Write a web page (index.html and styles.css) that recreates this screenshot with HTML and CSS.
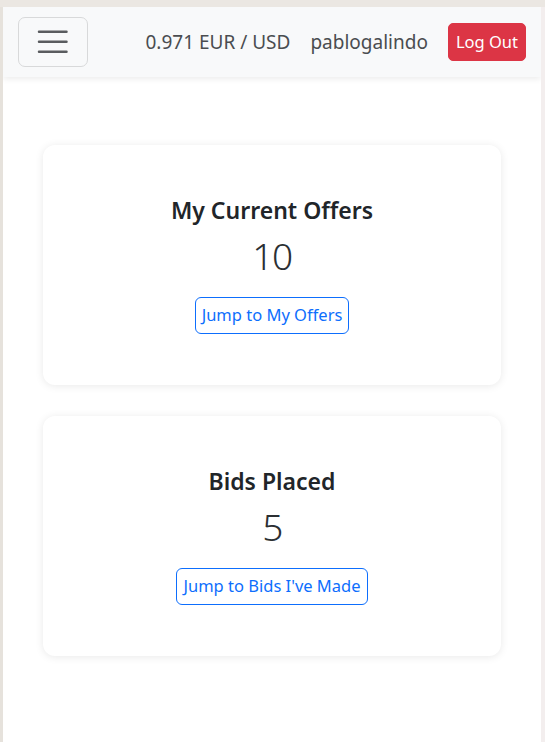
FILE: index.html
```html
<!DOCTYPE html>
<html lang="en">
<head>
<meta charset="utf-8">
<title>Dashboard</title>
<link rel="stylesheet" href="styles.css">
</head>
<body>
<nav class="navbar">
  <button class="toggler" type="button" aria-label="Toggle navigation">
    <svg class="toggler-icon" viewBox="0 0 30 30" width="37.5" height="37.5" aria-hidden="true">
      <path d="M4 7h22M4 15h22M4 23h22" stroke="#5a5c5f" stroke-width="2" stroke-linecap="round" fill="none"/>
    </svg>
  </button>
  <div class="nav-right">
    <span class="nav-text">0.971 EUR / USD</span>
    <span class="nav-text">pablogalindo</span>
    <button class="btn-logout" type="button">Log Out</button>
  </div>
</nav>
<main class="content">
  <section class="card">
    <h5 class="card-title">My Current Offers</h5>
    <div class="card-number">10</div>
    <a class="btn-outline" href="#">Jump to My Offers</a>
  </section>
  <section class="card">
    <h5 class="card-title">Bids Placed</h5>
    <div class="card-number">5</div>
    <a class="btn-outline" href="#">Jump to Bids I've Made</a>
  </section>
</main>
</body>
</html>
```

FILE: styles.css
```css
html {
  background: #ebe7e2;
  height: 100%;
}
body {
  margin: 7px 4px 0 3px;
  min-height: calc(100vh - 7px);
  background: #ffffff;
  font-family: "Noto Sans", "Open Sans", sans-serif;
  color: #212529;
  box-shadow: -3px 0 0 #e6e2dc, 4px 0 0 #f3eeee;
}
.navbar {
  display: flex;
  align-items: center;
  justify-content: space-between;
  height: 70px;
  box-sizing: border-box;
  padding: 10px 15px;
  background: #f8f9fa;
  box-shadow: 0 2px 6px rgba(0, 0, 0, 0.08);
  position: relative;
}
.toggler {
  width: 70px;
  height: 50px;
  display: flex;
  align-items: center;
  justify-content: center;
  background: transparent;
  border: 1px solid #d8d9da;
  border-radius: 7px;
  padding: 0;
}
.toggler-icon {
  display: block;
}
.nav-right {
  display: flex;
  align-items: center;
  gap: 20px;
}
.nav-text {
  font-size: 19px;
  color: #4a4d50;
}
.btn-logout {
  font-family: "Noto Sans", "Open Sans", sans-serif;
  font-size: 16.5px;
  line-height: 1.5;
  color: #ffffff;
  background: #dc3545;
  border: 1px solid #dc3545;
  border-radius: 5px;
  padding: 6px 7px;
}
.content {
  padding: 68px 40px 40px 40px;
  display: flex;
  flex-direction: column;
  gap: 31px;
}
.card {
  background: #ffffff;
  border-radius: 12px;
  box-shadow: 0 1px 8px rgba(0, 0, 0, 0.09);
  padding: 52px 20px 51px;
  display: flex;
  flex-direction: column;
  align-items: center;
}
.card-title {
  margin: 0;
  font-size: 23px;
  line-height: 27px;
  font-weight: 600;
  color: #212529;
}
.card-number {
  margin-top: 9px;
  font-size: 37px;
  line-height: 46px;
  font-weight: 300;
  letter-spacing: -1.5px;
  color: #2b2f33;
}
.btn-outline {
  margin-top: 18px;
  display: inline-block;
  font-size: 16.5px;
  line-height: 1.5;
  color: #0d6efd;
  border: 1px solid #0d6efd;
  border-radius: 6px;
  padding: 5px 6px;
  text-decoration: none;
}
```
